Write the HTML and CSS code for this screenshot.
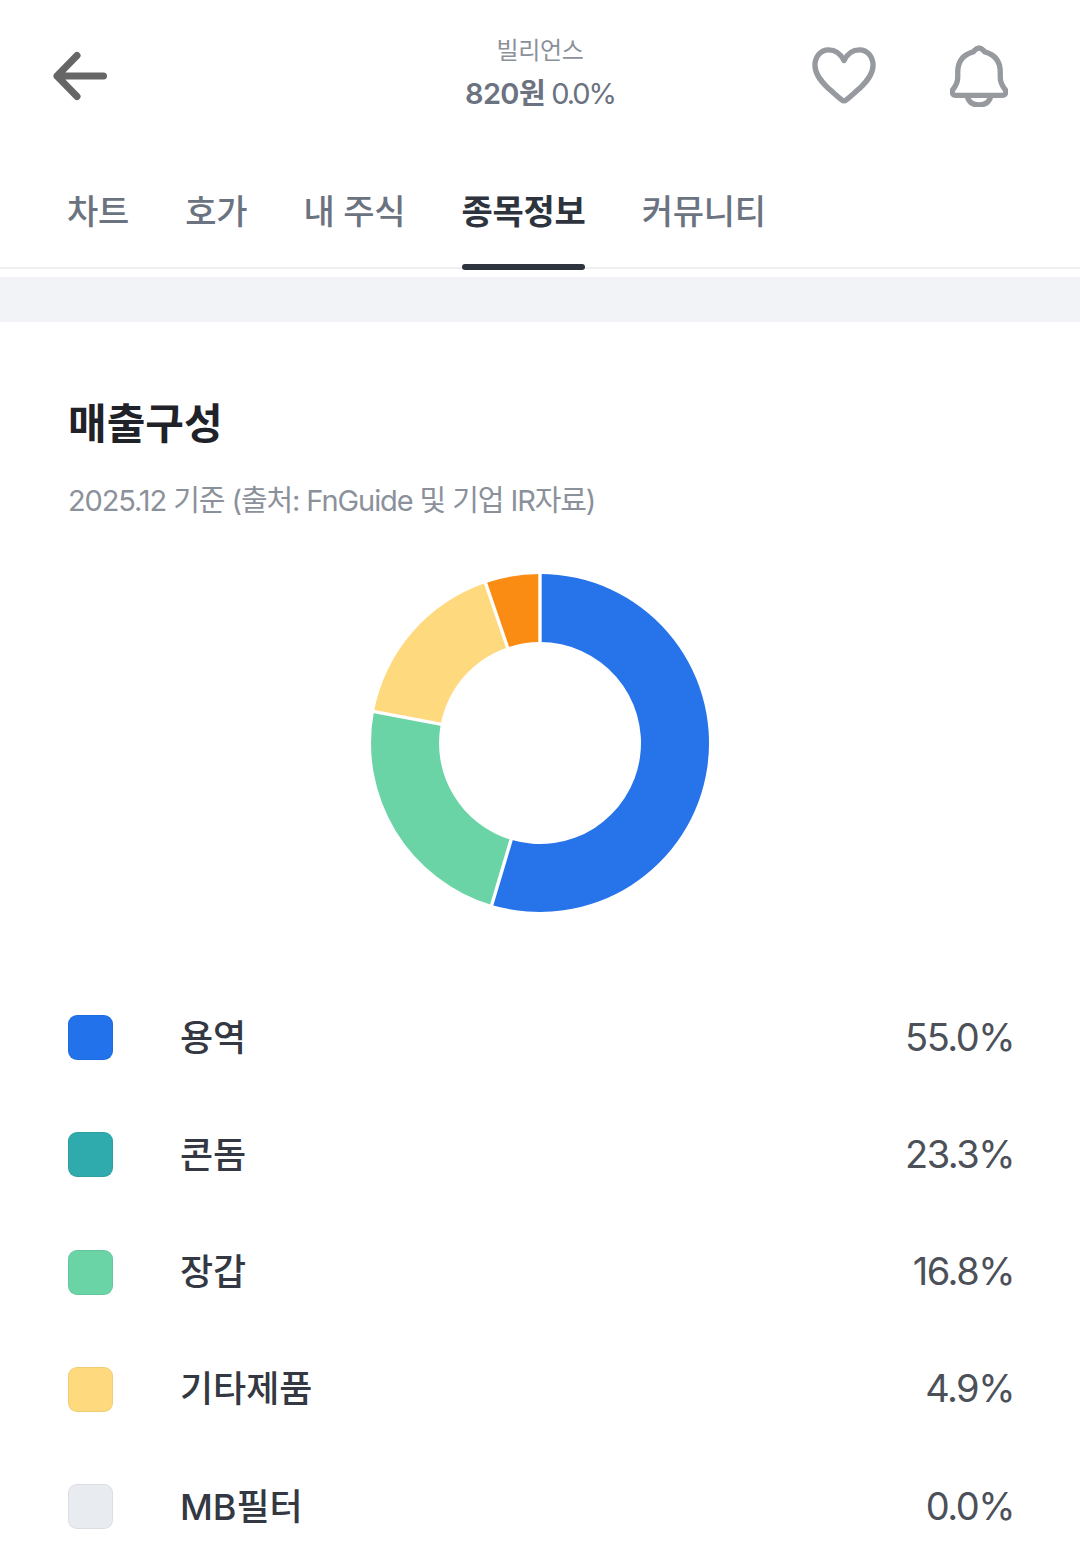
FILE: index.html
```html
<!DOCTYPE html>
<html lang="ko">

<head>
    <meta charset="utf-8" />
    <title>빌리언스</title>
    <link rel="stylesheet" href="styles.css">
</head>

<body>
    <!-- Header -->
    <header class="top-bar">
        <svg class="icon-back" width="60" height="56" viewBox="0 0 60 56">
            <path d="M27 7.5 L7 28 L27 48.5 M7 28 H53.5" />
        </svg>
        <div class="top-title">
            <div class="stock-name">빌리언스</div>
            <div class="stock-price"><b>820원</b> 0.0%</div>
        </div>
        <div class="top-icons">
            <svg class="icon-line" width="64" height="60" viewBox="0 0 66 62">
                <path d="M33 15 C29 7 23 4 17 4 C9 4 3 11 3 20 C3 29 9 36 16 43 C22 48 27 53 31 56 C32 57 34 57 35 56 C39 53 44 48 50 43 C57 36 63 29 63 20 C63 11 57 4 49 4 C43 4 37 7 33 15 Z" />
            </svg>
            <svg class="icon-line" width="58" height="62" viewBox="0 0 60 64">
                <path d="M30 3 C33 3 34 5 36 7 C47 10 52 18 52 28 V34 C52 39 54 42 57 46 C59 49 57 52 54 52 H6 C3 52 1 49 3 46 C6 42 8 39 8 34 V28 C8 18 13 10 24 7 C26 5 27 3 30 3 Z M18 52 C18 58 23 62 30 62 C37 62 42 58 42 52" />
            </svg>
        </div>
    </header>

    <!-- Tabs -->
    <nav class="tabs">
        <a class="tab">차트</a>
        <a class="tab">호가</a>
        <a class="tab">내 주식</a>
        <a class="tab active">종목정보</a>
        <a class="tab">커뮤니티</a>
    </nav>
    <div class="band"></div>

    <!-- Sales composition -->
    <section class="sales">
        <h2>매출구성</h2>
        <p class="source">2025.12 기준 (출처: FnGuide 및 기업 IR자료)</p>

        <div class="chart">
            <svg width="340" height="340" viewBox="0 0 340 340">
                <path fill="#2673ea" d="M170 1 A169 169 0 1 1 121.72 331.95 L141.14 266.79 A101 101 0 1 0 170 69 Z" />
                <path fill="#6bd4a6" d="M121.72 331.95 A169 169 0 0 1 3.94 138.62 L70.76 151.25 A101 101 0 0 0 141.14 266.79 Z" />
                <path fill="#ffd97d" d="M3.94 138.62 A169 169 0 0 1 115.54 10.02 L137.45 74.39 A101 101 0 0 0 70.76 151.25 Z" />
                <path fill="#fb8c13" d="M115.54 10.02 A169 169 0 0 1 170 1 V69 A101 101 0 0 0 137.45 74.39 Z" />
                <path class="chart-gap" d="M170 0 V70 M121.4 333 L141.4 265.8 M2.9 138.4 L71.8 151.4 M115.2 9 L137.8 75.3" />
            </svg>
        </div>

        <ul class="legend">
            <li>
                <span class="swatch blue"></span>
                <span class="legend-name">용역</span>
                <span class="legend-value">55.0%</span>
            </li>
            <li>
                <span class="swatch teal"></span>
                <span class="legend-name">콘돔</span>
                <span class="legend-value">23.3%</span>
            </li>
            <li>
                <span class="swatch green"></span>
                <span class="legend-name">장갑</span>
                <span class="legend-value">16.8%</span>
            </li>
            <li>
                <span class="swatch yellow"></span>
                <span class="legend-name">기타제품</span>
                <span class="legend-value">4.9%</span>
            </li>
            <li>
                <span class="swatch gray"></span>
                <span class="legend-name">MB필터</span>
                <span class="legend-value">0.0%</span>
            </li>
        </ul>
    </section>
</body>

</html>
```

FILE: styles.css
```css
html,
body {
    margin: 0;
    padding: 0;
    background: #ffffff;
}

body {
    width: 1080px;
    height: 1561px;
    overflow: hidden;
    font-family: Inter, "Noto Sans CJK KR", sans-serif;
    color: #333842;
}

/* Header */
.top-bar {
    display: flex;
    align-items: center;
    justify-content: space-between;
    height: 152px;
    padding: 0 72px 0 50px;
    position: relative;
}

.icon-back path {
    fill: none;
    stroke: #666666;
    stroke-width: 7;
    stroke-linecap: round;
    stroke-linejoin: round;
}

.top-title {
    position: absolute;
    left: 0;
    right: 0;
    top: 35px;
    text-align: center;
}

.stock-name {
    font-size: 24px;
    line-height: 32px;
    letter-spacing: -0.3px;
    color: #8b919b;
}

.stock-price {
    margin-top: 6px;
    font-size: 29px;
    line-height: 42px;
    letter-spacing: -2px;
    color: #6b7280;
}

.stock-price b {
    font-weight: 600;
    letter-spacing: -0.6px;
}

.top-icons {
    display: flex;
    align-items: center;
    gap: 74px;
}

.icon-line path {
    fill: none;
    stroke: #96999e;
    stroke-width: 5.5;
    stroke-linecap: round;
    stroke-linejoin: round;
}

/* Tabs */
.tabs {
    display: flex;
    gap: 56.3px;
    height: 117px;
    padding: 0 67px;
    box-sizing: border-box;
    border-bottom: 2px solid #eeeff1;
}

.tab {
    position: relative;
    font-size: 34px;
    font-weight: 500;
    line-height: 119px;
    height: 118px;
    letter-spacing: -0.3px;
    color: #6b7280;
}

.tab.active {
    font-weight: 700;
    color: #2e343e;
}

.tab.active::after {
    content: "";
    position: absolute;
    left: 0;
    right: 0;
    bottom: 0;
    height: 6px;
    border-radius: 3px;
    background: #2e343e;
}

.band {
    height: 45px;
    margin-top: 8px;
    background: #f2f3f7;
}

/* Sales composition */
.sales {
    padding: 0 68px;
}

.sales h2 {
    margin: 74px 0 0;
    font-size: 42px;
    line-height: 56px;
    font-weight: 700;
    color: #1f2329;
}

.source {
    margin: 29px 0 0;
    font-size: 29px;
    line-height: 40px;
    letter-spacing: -1.1px;
    color: #8b919b;
}

.chart {
    display: flex;
    justify-content: center;
    margin-top: 51.5px;
}

.chart svg {
    display: block;
}

.chart-gap {
    fill: none;
    stroke: #ffffff;
    stroke-width: 3.4;
}

.legend {
    list-style: none;
    margin: 102.5px 0 0;
    padding: 0;
}

.legend li {
    display: flex;
    align-items: center;
    height: 45px;
    margin-bottom: 72.25px;
}

.swatch {
    width: 45px;
    height: 45px;
    box-sizing: border-box;
    border-radius: 9px;
    border: 1px solid rgba(0, 0, 0, 0.06);
    margin-right: 67px;
}

.swatch.blue { background: #2272eb; }
.swatch.teal { background: #2fabad; }
.swatch.green { background: #6bd4a6; }
.swatch.yellow { background: #ffd97d; }
.swatch.gray { background: #e8ebf0; }

.legend-name {
    flex: 1;
    padding-bottom: 6px;
    font-size: 36px;
    font-weight: 500;
    color: #333842;
}

.legend-value {
    margin-right: -2px;
    padding-bottom: 2px;
    font-size: 38px;
    letter-spacing: -1.5px;
    color: #4b5059;
}
```
